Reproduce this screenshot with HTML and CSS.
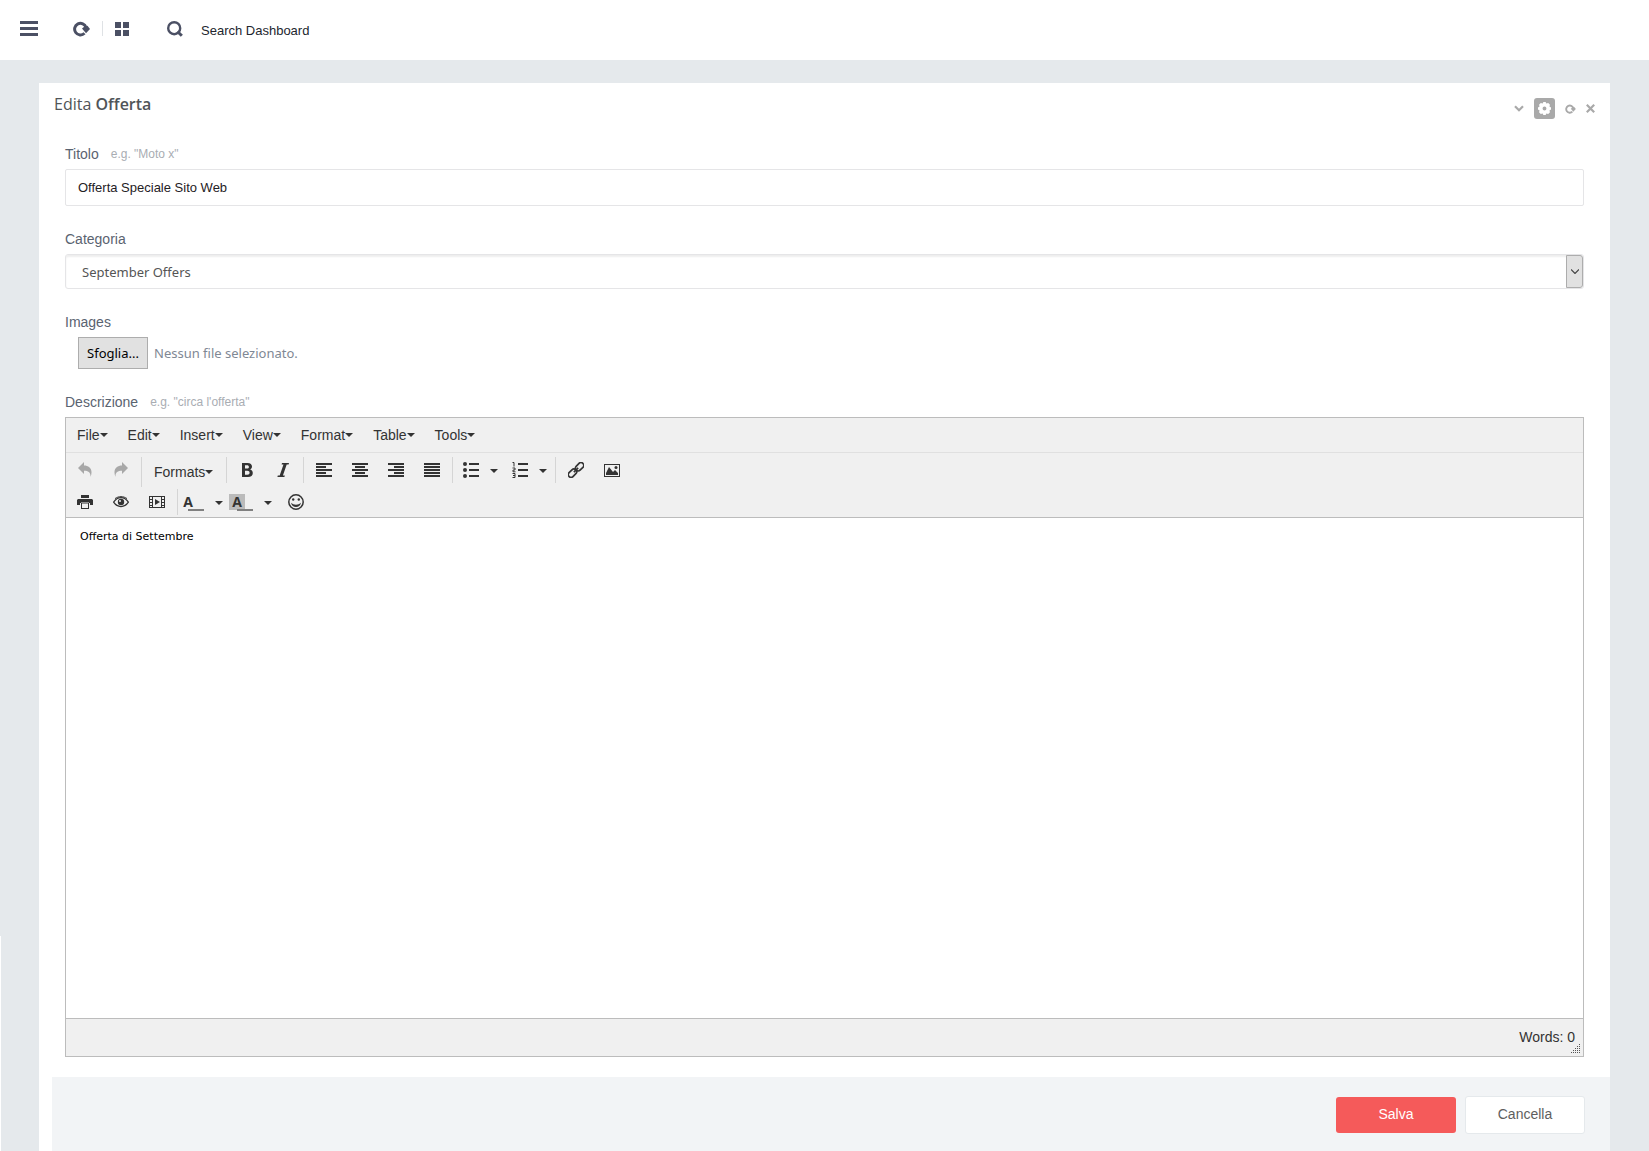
FILE: index.html
```html
<!DOCTYPE html>
<html lang="it">
<head>
	<meta charset="utf-8">
	<meta name="viewport" content="width=device-width, initial-scale=1">
	<title>Edita Offerta</title>
	<link rel="stylesheet" href="styles.css">
</head>
<body>

   <!-- icons used more than once -->
   <svg class="sprite" aria-hidden="true">
      <symbol id="i-refresh" viewBox="0 0 17 16">
         <path d="M11.500 12.300A5.800 5.800 0 1 1 13 6.500" fill="none" stroke="currentColor" stroke-width="3"/>
         <path d="M9 7.500L11.500 5.500 14.500 4.800 17 8l-4 4.200z" fill="currentColor"/>
      </symbol>
      <symbol id="i-caret" viewBox="0 0 8 4"><path d="M0 0h8L4 4z" fill="currentColor"/></symbol>
   </svg>

   <header class="header">
      <button class="nav-btn" aria-label="Menu">
         <svg width="18" height="15" viewBox="0 0 18 15"><path d="M0 0h18v3H0zM0 6h18v3H0zM0 12h18v3H0z"/></svg>
      </button>
      <div class="nav-group">
         <button class="nav-btn" aria-label="Aggiorna"><svg width="17" height="16"><use href="#i-refresh"/></svg></button>
         <span class="nav-sep"></span>
         <button class="nav-btn" aria-label="Griglia">
            <svg width="14" height="14" viewBox="0 0 14 14"><path d="M0 0h6v6H0zM8 0h6v6H8zM0 8h6v6H0zM8 8h6v6H8z"/></svg>
         </button>
      </div>
      <div class="search">
         <svg width="16" height="16" viewBox="0 0 16 16" fill="none"><circle cx="7.200" cy="7.200" r="6" stroke="currentColor" stroke-width="2.400"/><path d="M10.500 10.500l4.300 4.300" stroke="currentColor" stroke-width="3"/></svg>
         <input type="text" class="search-input" placeholder="Search Dashboard" aria-label="Search Dashboard">
      </div>
   </header>

   <main class="content">
      <form class="panel">
         <div class="panel-head">
            <h4 class="panel-title">Edita <b>Offerta</b></h4>
            <div class="tools">
               <button type="button" aria-label="Riduci"><svg width="10" height="7" viewBox="0 0 10 7"><path d="M1 1.200l4 4 4-4" fill="none" stroke="currentColor" stroke-width="2.200"/></svg></button>
               <button type="button" class="tool-config" aria-label="Configura">
                  <svg width="13" height="13" viewBox="0 0 14 14"><path fill="currentColor" fill-rule="evenodd" d="M5.800 0h2.400l.8 1.600 2-.6 1.900 1.900-.6 2 1.700.9v2.400l-1.700.9.6 2-1.900 1.900-2-.6-.8 1.600H5.800L5 12.400l-2 .6-1.900-1.900.6-2L0 8.200V5.800l1.700-.9-.6-2L3 1l2 .6zM7 4.900a2.100 2.100 0 1 0 0 4.200 2.100 2.100 0 0 0 0-4.200z"/></svg>
               </button>
               <button type="button" aria-label="Ricarica"><svg width="11" height="10"><use href="#i-refresh"/></svg></button>
               <button type="button" aria-label="Chiudi"><svg width="9" height="9" viewBox="0 0 9 9"><path d="M.8.800l7.400 7.400M8.200.800L.8 8.200" stroke="currentColor" stroke-width="2.200"/></svg></button>
            </div>
         </div>

         <div class="panel-body">
            <div class="field">
               <div class="field-head"><label for="titolo">Titolo</label><span class="help">e.g. "Moto x"</span></div>
               <input type="text" id="titolo" class="text-input" value="Offerta Speciale Sito Web">
            </div>

            <div class="field">
               <div class="field-head"><label for="categoria">Categoria</label></div>
               <div class="select-wrap">
                  <select id="categoria" class="select">
                     <option>September Offers</option>
                  </select>
                  <span class="select-arrow"><svg width="8" height="5" viewBox="0 0 8 5"><path d="M0 .5l4 4 4-4" fill="none" stroke="currentColor" stroke-width="1.200"/></svg></span>
               </div>
            </div>

            <div class="field">
               <div class="field-head"><label for="images">Images</label></div>
               <div class="file-row">
                  <input type="file" id="images" class="file-input">
                  <label for="images" class="file-btn">Sfoglia...</label>
                  <span class="file-name">Nessun file selezionato.</span>
               </div>
            </div>

            <div class="field">
               <div class="field-head"><label for="descrizione">Descrizione</label><span class="help">e.g. "circa l'offerta"</span></div>
               <div class="editor">
                  <div class="menubar">
                     <button type="button">File<svg class="caret"><use href="#i-caret"/></svg></button>
                     <button type="button">Edit<svg class="caret"><use href="#i-caret"/></svg></button>
                     <button type="button">Insert<svg class="caret"><use href="#i-caret"/></svg></button>
                     <button type="button">View<svg class="caret"><use href="#i-caret"/></svg></button>
                     <button type="button">Format<svg class="caret"><use href="#i-caret"/></svg></button>
                     <button type="button">Table<svg class="caret"><use href="#i-caret"/></svg></button>
                     <button type="button">Tools<svg class="caret"><use href="#i-caret"/></svg></button>
                  </div>

                  <div class="toolbar">
                     <div class="tb-row">
                        <div class="tb-group">
                           <button type="button" class="tb-btn" disabled aria-label="Undo"><svg viewBox="0 0 16 16"><path d="M1 6l6-6v3.500c5.500 0 9.500 4 6.500 11.500.3-4.500-2-6.200-6.500-6.200V12z"/></svg></button>
                           <button type="button" class="tb-btn" disabled aria-label="Redo"><svg viewBox="0 0 16 16"><path d="M15 6L9 0v3.500C3.500 3.500-.5 7.500 2.500 15 2.200 10.500 4.500 8.800 9 8.800V12z"/></svg></button>
                        </div>
                        <div class="tb-group">
                           <button type="button" class="tb-formats">Formats<svg class="caret"><use href="#i-caret"/></svg></button>
                        </div>
                        <div class="tb-group">
                           <button type="button" class="tb-btn" aria-label="Bold"><svg viewBox="0 0 16 16"><path fill-rule="evenodd" d="M3 1h5.500C11.500 1 13 2.500 13 4.600c0 1.400-.7 2.400-1.900 2.900 1.700.5 2.700 1.700 2.700 3.500C13.800 13.500 12 15 9 15H3zm3 2.200v3.400h1.900c1.300 0 2-.6 2-1.700s-.7-1.700-2-1.700zm0 5.500v4h2.300c1.500 0 2.300-.7 2.300-2s-.8-2-2.300-2z"/></svg></button>
                           <button type="button" class="tb-btn" aria-label="Italic"><svg viewBox="0 0 16 16"><path d="M7 1h7l-.4 1.500h-1.900L7.900 13.500h1.900L9.400 15h-7l.4-1.500h1.900L8.500 2.500H6.600z"/></svg></button>
                        </div>
                        <div class="tb-group">
                           <button type="button" class="tb-btn" aria-label="Align left"><svg viewBox="0 0 16 16"><path d="M0 1h16v2H0zM0 4h10v2H0zM0 7h16v2H0zM0 10h10v2H0zM0 13h16v2H0z"/></svg></button>
                           <button type="button" class="tb-btn" aria-label="Align center"><svg viewBox="0 0 16 16"><path d="M0 1h16v2H0zM3 4h10v2H3zM0 7h16v2H0zM3 10h10v2H3zM0 13h16v2H0z"/></svg></button>
                           <button type="button" class="tb-btn" aria-label="Align right"><svg viewBox="0 0 16 16"><path d="M0 1h16v2H0zM6 4h10v2H6zM0 7h16v2H0zM6 10h10v2H6zM0 13h16v2H0z"/></svg></button>
                           <button type="button" class="tb-btn" aria-label="Justify"><svg viewBox="0 0 16 16"><path d="M0 1h16v2H0zM0 4h16v2H0zM0 7h16v2H0zM0 10h16v2H0zM0 13h16v2H0z"/></svg></button>
                        </div>
                        <div class="tb-group">
                           <button type="button" class="tb-split" aria-label="Bullet list"><svg viewBox="0 0 16 16"><path d="M6 1h10v2H6zM6 7h10v2H6zM6 13h10v2H6z"/><circle cx="2" cy="2" r="2"/><circle cx="2" cy="8" r="2"/><circle cx="2" cy="14" r="2"/></svg><svg class="caret"><use href="#i-caret"/></svg></button>
                           <button type="button" class="tb-split" aria-label="Numbered list"><svg viewBox="0 0 16 16"><path d="M6 1h10v2H6zM6 7h10v2H6zM6 13h10v2H6z"/><path d="M.5.500h1.500V4.500M.5 6h2.500v2h-2v1.800h2.500M.5 11.500h2.500v4H.5M1 13.500h2" fill="none" stroke="currentColor"/></svg><svg class="caret"><use href="#i-caret"/></svg></button>
                        </div>
                        <div class="tb-group">
                           <button type="button" class="tb-btn" aria-label="Link"><svg viewBox="0 0 16 16"><g fill="none" stroke="currentColor" stroke-width="1.700" transform="rotate(-45 8 8)"><rect x="-1.500" y="5" width="9.500" height="5.500" rx="2.700"/><rect x="8" y="5.500" width="9.500" height="5.500" rx="2.700"/><path d="M5 8h6"/></g></svg></button>
                           <button type="button" class="tb-btn" aria-label="Image"><svg viewBox="0 0 16 16"><path fill-rule="evenodd" d="M0 2h16v13H0zm1 1v11h14V3z"/><path d="M2 13V11l3-6 4 5 2-2 3 3v2z"/><circle cx="12" cy="5.500" r="1.500"/></svg></button>
                        </div>
                     </div>
                     <div class="tb-row">
                        <div class="tb-group">
                           <button type="button" class="tb-btn" aria-label="Print"><svg viewBox="0 0 16 16"><path fill-rule="evenodd" d="M4 1h8v3H4zM1 5h14l1 1v5h-3V9H3v2H0V6zM4 8.500h8V15H4zm1 1V14h6V9.500z"/></svg></button>
                           <button type="button" class="tb-btn" aria-label="Preview"><svg viewBox="0 0 16 16"><path d="M.6 8.200C4.500 2.200 11.500 2.200 15.400 8.200 11.500 14 4.500 14 .6 8.200z" fill="none" stroke="currentColor" stroke-width="1.200"/><path d="M2 4.600C5.500 2 10.500 2 14 4.600" fill="none" stroke="currentColor"/><circle cx="8" cy="8" r="3.200"/><circle cx="7" cy="7" r="1" fill="#f0f0f0"/></svg></button>
                           <button type="button" class="tb-btn" aria-label="Media"><svg viewBox="0 0 16 16"><path fill-rule="evenodd" d="M0 2h16v12H0zm4 1v10h8V3zM1 3v2h2V3zm0 3v2h2V6zm0 3v2h2V9zm0 3v1h2v-1zM13 3v2h2V3zm0 3v2h2V6zm0 3v2h2V9zm0 3v1h2v-1z"/><path d="M6 5l5 3-5 3z"/></svg></button>
                        </div>
                        <div class="tb-group">
                           <button type="button" class="tb-color" aria-label="Text color"><span class="letter">A</span><svg class="caret"><use href="#i-caret"/></svg></button>
                           <button type="button" class="tb-color tb-back" aria-label="Background color"><span class="letter">A</span><svg class="caret"><use href="#i-caret"/></svg></button>
                           <button type="button" class="tb-btn" aria-label="Emoticons"><svg viewBox="0 0 16 16"><circle cx="8" cy="8" r="7.200" fill="none" stroke="currentColor" stroke-width="1.500"/><circle cx="5.200" cy="5.500" r="1.200"/><circle cx="10.800" cy="5.500" r="1.200"/><path d="M3 8.800c2.500 2.600 7.500 2.600 10 0-.8 5.600-9.200 5.600-10 0z"/></svg></button>
                        </div>
                     </div>
                  </div>

                  <textarea id="descrizione" class="editor-area">Offerta di Settembre</textarea>

                  <div class="statusbar">
                     <span>Words: 0</span>
                     <svg class="grip" width="10" height="10" viewBox="0 0 10 10"><path d="M8 0h1v1H8zM6 2h1v1H6zM8 2h1v1H8zM4 4h1v1H4zM6 4h1v1H6zM8 4h1v1H8zM2 6h1v1H2zM4 6h1v1H4zM6 6h1v1H6zM8 6h1v1H8zM0 8h1v1H0zM2 8h1v1H2zM4 8h1v1H4zM6 8h1v1H6zM8 8h1v1H8z"/></svg>
                  </div>
               </div>
            </div>
         </div>

         <div class="form-actions">
            <button type="submit" class="btn btn-danger">Salva</button>
            <button type="button" class="btn btn-white">Cancella</button>
         </div>
      </form>
   </main>

</body>
</html>
```
FILE: styles.css
```css
*{
   box-sizing: border-box;
}

body{
   margin: 0;
   min-height: 100vh;
   display: flex;
   flex-direction: column;
   position: relative;
   background-color: #e5e9ec;
   font-family: "Liberation Sans", Arial, sans-serif;
   font-size: 14px;
   line-height: 20px;
   color: #5a6370;
}

/* edge of the collapsed side menu */
body::after{
   content: "";
   position: absolute;
   left: 0;
   bottom: 0;
   width: 1px;
   height: 215px;
   background-color: #fff;
}

button, input, select, textarea{
   font-family: inherit;
   font-size: inherit;
   line-height: inherit;
   color: inherit;
}

button{
   padding: 0;
   border: none;
   background: none;
   cursor: pointer;
}

svg{
   display: block;
   flex: none;
}

.sprite{
   position: absolute;
   width: 0;
   height: 0;
}

.caret{
   width: 8px;
   height: 4px;
}

/* header */

.header{
   display: flex;
   align-items: center;
   gap: 35px;
   height: 60px;
   padding: 0 20px 3px;
   background-color: #fff;
   color: #4b5064;
}

.nav-group{
   display: flex;
   align-items: center;
   gap: 12px;
}

.nav-btn svg{
   fill: currentColor;
}

.nav-sep{
   width: 1px;
   height: 15px;
   background-color: #dfe2e5;
}

.search{
   display: flex;
   align-items: center;
   gap: 18px;
   margin-left: 3px;
}

.search-input{
   width: 220px;
   height: 26px;
   padding: 4px 0 0;
   border: none;
   outline: none;
   font-size: 13px;
}

.search-input::placeholder{
   color: #22262e;
   opacity: 1;
}

/* panel */

.content{
   flex: 1;
   display: flex;
   padding: 23px 39px 0;
}

.panel{
   flex: 1;
   display: flex;
   flex-direction: column;
   background-color: #fff;
}

.panel-head{
   display: flex;
   justify-content: space-between;
   padding: 10px 15px 0;
}

.panel-title{
   margin: 0;
   font-family: "Open Sans", sans-serif;
   font-size: 16px;
   font-weight: 400;
   line-height: 22px;
   color: #505458;
}

.panel-title b{
   font-weight: 600;
}

.tools{
   display: flex;
   align-items: center;
   gap: 10px;
   height: 31px;
   color: #a9a9a9;
}

.tool-config{
   display: grid;
   place-items: center;
   width: 21px;
   height: 21px;
   border-radius: 3px;
   background-color: #a9a9a9;
   color: #fff;
}

.panel-body{
   flex: 1;
   padding: 20px 26px;
}

.field{
   margin-bottom: 23px;
}

.field:last-child{
   margin-bottom: 0;
}

.field-head{
   display: flex;
   gap: 12px;
   margin-bottom: 5px;
}

.help{
   font-size: 12px;
   color: #a9adb3;
}

.text-input{
   display: block;
   width: 100%;
   height: 37px;
   padding: 0 12px;
   border: 1px solid #e5e5e7;
   border-radius: 2px;
   outline: none;
   font-size: 13px;
   color: #1f2125;
}

.select-wrap{
   position: relative;
}

.select{
   display: block;
   width: 100%;
   height: 35px;
   padding: 0 16px;
   border: 1px solid #e5e5e7;
   border-radius: 3px;
   appearance: none;
   background-color: #fff;
   box-shadow: inset 0 2px 2px #eee;
   font-family: "Noto Sans", sans-serif;
   font-size: 13px;
   color: #555;
}

.select-arrow{
   position: absolute;
   top: 1px;
   right: 1px;
   bottom: 1px;
   width: 17px;
   display: grid;
   place-items: center;
   border: 1px solid #adadad;
   border-radius: 0 3px 3px 0;
   background-color: #e1e1e1;
   color: #444;
   pointer-events: none;
}

.file-row{
   position: relative;
   display: flex;
   align-items: center;
   gap: 6px;
   padding-left: 13px;
   font-family: "Noto Sans", sans-serif;
   font-size: 13px;
}

.file-input{
   position: absolute;
   width: 1px;
   height: 1px;
   opacity: 0;
}

.file-btn{
   width: 70px;
   height: 32px;
   border: 1px solid #adadad;
   background-color: #e1e1e1;
   line-height: 30px;
   text-align: center;
   color: #000;
}

.file-name{
   color: #7f8894;
}

/* editor */

.editor{
   border: 1px solid #bcbcbc;
   background-color: #f0f0f0;
   color: #333;
}

.menubar{
   display: flex;
   border-bottom: 1px solid #e0e0e0;
   padding: 2px 0 2px 1px;
}

.menubar button, .tb-formats{
   display: flex;
   align-items: center;
   height: 30px;
   padding: 0 10px;
}

.toolbar{
   display: flex;
   flex-direction: column;
   gap: 2px;
   padding: 4px 1px 2px;
   border-bottom: 1px solid #bcbcbc;
}

.tb-row{
   display: flex;
   align-items: flex-start;
}

.tb-group{
   display: flex;
}

.tb-group + .tb-group{
   margin-left: 2px;
   padding-left: 2px;
   border-left: 1px solid #d5d5d5;
}

.tb-formats{
   padding-right: 11px;
}

.tb-btn, .tb-split, .tb-color{
   display: flex;
   align-items: center;
   height: 26px;
}

.tb-btn{
   padding: 0 10px;
}

.tb-btn svg, .tb-split svg:first-child{
   width: 16px;
   height: 16px;
   fill: currentColor;
}

.tb-btn:disabled{
   color: #a8a8a8;
}

.tb-split, .tb-color{
   width: 49px;
   justify-content: space-between;
   padding: 0 6px 0 8px;
}

.tb-split .caret, .tb-color .caret{
   margin-top: 2px;
}

.tb-color{
   position: relative;
   padding-left: 0;
}

.tb-color::after{
   content: "";
   position: absolute;
   left: 8px;
   bottom: 4px;
   width: 16px;
   height: 2px;
   background-color: #808080;
}

.letter{
   width: 16px;
   height: 16px;
   line-height: 16px;
   font-family: "Open Sans", sans-serif;
   font-weight: 700;
   text-align: center;
}

.tb-back .letter{
   background-color: #bbb;
}

.editor-area{
   display: block;
   width: 100%;
   height: 500px;
   padding: 9px 14px;
   border: none;
   outline: none;
   resize: none;
   background-color: #fff;
   font-family: "DejaVu Sans", Verdana, sans-serif;
   font-size: 11px;
   color: #000;
}

.statusbar{
   position: relative;
   display: flex;
   justify-content: flex-end;
   height: 38px;
   padding: 8px;
   border-top: 1px solid #bcbcbc;
}

.grip{
   position: absolute;
   right: 2px;
   bottom: 2px;
   fill: #555;
}

/* buttons */

.form-actions{
   display: flex;
   justify-content: flex-end;
   align-items: center;
   gap: 9px;
   margin-left: 13px;
   padding: 19px 25px 17px;
   background-color: #f2f4f6;
}

.btn{
   width: 120px;
   height: 36px;
   padding-bottom: 2px;
   border-radius: 3px;
}

.btn-danger{
   background-color: #f55a5a;
   color: #fff;
}

.btn-white{
   height: 38px;
   border: 1px solid #e5e9ec;
   background-color: #fff;
   color: #5e5e5e;
}
```
